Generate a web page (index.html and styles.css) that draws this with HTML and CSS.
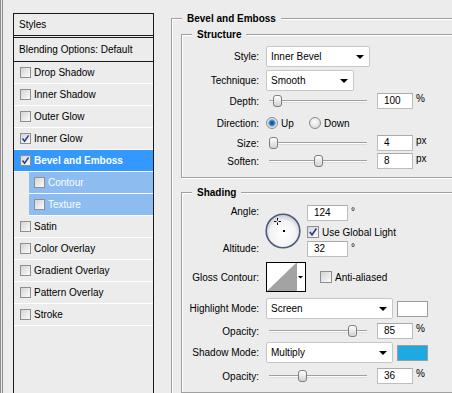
FILE: index.html
```html
<!DOCTYPE html>
<html lang="en">
<head>
    <meta charset="UTF-8">
    <meta name="viewport" content="width=device-width, initial-scale=1.0">
    <title>Layer Style</title>
    <link rel="stylesheet" href="styles.css">
</head>
<body>
    <div class="dialog">
        <!-- Effect list on the left -->
        <div class="styles-panel">
            <div class="styles-list">
                <div class="list-head">Styles</div>
                <div class="list-blend">Blending Options: Default</div>
                <div class="effect"><span class="check"></span>Drop Shadow</div>
                <div class="effect"><span class="check"></span>Inner Shadow</div>
                <div class="effect"><span class="check"></span>Outer Glow</div>
                <div class="effect"><span class="check"><svg width="9" height="9" viewBox="0 0 9 9"><path d="M1.5 4.5L3.6 7.2L7.6 1.3" fill="none" stroke="#2b3e8e" stroke-width="1.5"/></svg></span>Inner Glow</div>
                <div class="effect is-selected"><span class="check"><svg width="9" height="9" viewBox="0 0 9 9"><path d="M1.5 4.5L3.6 7.2L7.6 1.3" fill="none" stroke="#2b3e8e" stroke-width="1.5"/></svg></span>Bevel and Emboss</div>
                <div class="effect is-sub"><span class="check"></span>Contour</div>
                <div class="effect is-sub"><span class="check"></span>Texture</div>
                <div class="effect"><span class="check"></span>Satin</div>
                <div class="effect"><span class="check"></span>Color Overlay</div>
                <div class="effect"><span class="check"></span>Gradient Overlay</div>
                <div class="effect"><span class="check"></span>Pattern Overlay</div>
                <div class="effect"><span class="check"></span>Stroke</div>
            </div>
        </div>

        <!-- Options for the selected effect -->
        <div class="options">
            <fieldset class="group group-main">
                <legend>Bevel and Emboss</legend>

                <fieldset class="group group-sub structure">
                    <legend>Structure</legend>
                    <div class="row row-select">
                        <span class="label">Style:</span>
                        <div class="select select-style"><span>Inner Bevel</span><span class="arrow"></span></div>
                    </div>
                    <div class="row row-select row-technique">
                        <span class="label">Technique:</span>
                        <div class="select select-technique"><span>Smooth</span><span class="arrow"></span></div>
                    </div>
                    <div class="row row-field row-depth">
                        <span class="label">Depth:</span>
                        <div class="slider"><span class="thumb" style="left: 4px"></span></div>
                        <span class="num">100</span><span class="unit">%</span>
                    </div>
                    <div class="row row-field row-direction">
                        <span class="label">Direction:</span>
                        <span class="radio-opt radio-first"><span class="radio on"></span>Up</span>
                        <span class="radio-opt"><span class="radio"></span>Down</span>
                    </div>
                    <div class="row row-field row-size">
                        <span class="label">Size:</span>
                        <div class="slider"><span class="thumb" style="left: 0px"></span></div>
                        <span class="num">4</span><span class="unit">px</span>
                    </div>
                    <div class="row row-field">
                        <span class="label">Soften:</span>
                        <div class="slider"><span class="thumb" style="left: 45px"></span></div>
                        <span class="num">8</span><span class="unit">px</span>
                    </div>
                </fieldset>

                <fieldset class="group group-sub shading">
                    <legend>Shading</legend>
                    <div class="angle-block">
                        <div class="label angle-labels"><span>Angle:</span><span>Altitude:</span></div>
                        <svg class="dial" width="36" height="36" viewBox="0 0 36 36">
                            <defs>
                                <radialGradient id="dialFill" cx="50%" cy="58%" r="55%">
                                    <stop offset="0" stop-color="#ffffff"/>
                                    <stop offset="0.7" stop-color="#f3f3f3"/>
                                    <stop offset="1" stop-color="#cdcdcd"/>
                                </radialGradient>
                            </defs>
                            <circle cx="18" cy="18" r="16.8" fill="url(#dialFill)" stroke="#4b5c7e" stroke-width="1.6"/>
                            <path d="M9 8.5h2.5M13.5 8.5h2.5M12.5 5v2.5M12.5 9.5v2.5" stroke="#000" stroke-width="1"/>
                            <rect x="18" y="17" width="2" height="2" fill="#000"/>
                        </svg>
                        <div class="angle-fields">
                            <div class="field-line"><span class="num num-wide">124</span><span class="unit">°</span></div>
                            <div class="check-line"><span class="check check-lg"><svg width="10" height="10" viewBox="0 0 10 10"><path d="M1.8 5L4 7.8L8.4 1.5" fill="none" stroke="#2b3e8e" stroke-width="1.6"/></svg></span>Use Global Light</div>
                            <div class="field-line"><span class="num num-wide">32</span><span class="unit">°</span></div>
                        </div>
                    </div>
                    <div class="row row-gloss">
                        <span class="label">Gloss Contour:</span>
                        <svg class="contour" width="40" height="30" viewBox="0 0 40 30">
                            <rect x="0.5" y="0.5" width="39" height="29" fill="#fff" stroke="#000"/>
                            <polygon points="1,29 30,1 30,29" fill="#a3a3a3"/>
                            <line x1="30.5" y1="1" x2="30.5" y2="29" stroke="#a3a3a3"/>
                            <polygon points="32,14 37,14 34.5,16.5" fill="#000"/>
                        </svg>
                        <span class="check-line anti"><span class="check check-lg"></span>Anti-aliased</span>
                    </div>
                    <div class="row row-select row-mode">
                        <span class="label">Highlight Mode:</span>
                        <div class="select select-mode"><span>Screen</span><span class="arrow"></span></div>
                        <span class="swatch"></span>
                    </div>
                    <div class="row row-field row-opacity">
                        <span class="label">Opacity:</span>
                        <div class="slider"><span class="thumb" style="left: 79px"></span></div>
                        <span class="num">85</span><span class="unit">%</span>
                    </div>
                    <div class="row row-select row-shadow">
                        <span class="label">Shadow Mode:</span>
                        <div class="select select-mode"><span>Multiply</span><span class="arrow"></span></div>
                        <span class="swatch swatch-blue"></span>
                    </div>
                    <div class="row row-field row-last">
                        <span class="label">Opacity:</span>
                        <div class="slider"><span class="thumb" style="left: 29px"></span></div>
                        <span class="num">36</span><span class="unit">%</span>
                    </div>
                </fieldset>
            </fieldset>
        </div>
    </div>
</body>
</html>
```

FILE: styles.css
```css
html, body {
    margin: 0;
    padding: 0;
    height: 393px;
    overflow: hidden;
}
body {
    background-color: #ececec;
    font-family: "Liberation Sans", Arial, sans-serif;
    font-size: 10px;
    color: #000;
}
.dialog {
    display: flex;
    height: 393px;
    border-left: 3px double #8c8c8c;
    overflow: hidden;
}

/* left list */
.styles-panel {
    padding: 13px 0 0 10px;
    flex: none;
}
.styles-list {
    width: 139px;
    height: 420px;
    border: 1px solid #1a1a1a;
}
.list-head {
    height: 21px;
    line-height: 21px;
    padding-left: 5px;
    border-bottom: 3px double #1a1a1a;
}
.list-blend {
    height: 23px;
    line-height: 23px;
    padding-left: 5px;
    border-bottom: 1px solid #1a1a1a;
}
.effect {
    display: flex;
    align-items: center;
    height: 21px;
    padding-left: 6px;
    border-bottom: 1px solid #fff;
}
.effect.is-selected {
    background-color: #3399ff;
    color: #fff;
    font-weight: bold;
}
.effect.is-sub {
    margin-left: 15px;
    padding-left: 5px;
    background-color: #8cbcf0;
    color: #fff;
}
.check {
    display: flex;
    align-items: center;
    justify-content: center;
    width: 9px;
    height: 9px;
    margin-right: 3px;
    border: 1px solid #8f8f8f;
    background: linear-gradient(135deg, #d4d4d4, #fbfbfb);
    flex: none;
}
.check-lg {
    width: 10px;
    height: 10px;
}

/* right side */
.options {
    margin-left: 17px;
    padding-top: 12px;
}
.group {
    margin: 0;
    padding: 3px 0 0 9px;
    border: 1px solid #a0a0a0;
    box-shadow: inset 1px 1px 0 #fff, 1px 1px 0 #fff;
    min-width: 0;
}
.group legend {
    padding: 0 5px;
    font-weight: bold;
    line-height: 13px;
    background-color: #ececec;
}
.group-main {
    width: 330px;
    height: 500px;
}
.group-main > legend {
    margin-left: 1px;
}
.group-sub {
    padding: 5px 0 7px 10px;
}
.shading {
    margin-top: 8px;
    padding-top: 6px;
}

.row {
    display: flex;
    align-items: center;
}
.label {
    display: flex;
    justify-content: flex-end;
    width: 67px;
    margin-right: 7px;
    white-space: nowrap;
    flex: none;
}
.row-select {
    height: 21px;
}
.row-technique {
    margin-top: 3px;
}
.row-field {
    height: 18px;
}
.row-depth {
    margin-top: 1px;
}
.row-direction {
    margin-top: 4px;
}
.row-size {
    margin-top: 2px;
}
.select {
    display: flex;
    align-items: center;
    justify-content: space-between;
    box-sizing: border-box;
    height: 21px;
    padding: 0 5px 0 4px;
    background-color: #fff;
    border: 1px solid #c6c6c6;
    border-radius: 2px;
}
.select-style {
    width: 104px;
}
.select-technique {
    width: 88px;
}
.select-mode {
    width: 127px;
}
.arrow {
    width: 0;
    height: 0;
    border-left: 4px solid transparent;
    border-right: 4px solid transparent;
    border-top: 4px solid #000;
}
.slider {
    position: relative;
    width: 98px;
    height: 1px;
    margin: 0 10px 0 3px;
    border-top: 1px solid #9f9f9f;
    border-bottom: 1px solid #dcdcdc;
    background-color: #fff;
}
.thumb {
    position: absolute;
    top: -6px;
    width: 9px;
    height: 12px;
    box-sizing: border-box;
    border: 1px solid #7e7e7e;
    border-radius: 3px;
    background: linear-gradient(#ffffff, #d2d2d2);
}
.num {
    box-sizing: border-box;
    width: 36px;
    height: 16px;
    line-height: 14px;
    padding-left: 6px;
    background-color: #fff;
    border: 1px solid #bdbdbd;
    border-top-color: #aaaaaa;
}
.num-wide {
    width: 41px;
}
.unit {
    align-self: flex-start;
    margin-left: 3px;
    line-height: 13px;
}
.radio-opt {
    display: flex;
    align-items: center;
}
.radio-first {
    width: 43px;
}
.radio {
    width: 12px;
    height: 12px;
    box-sizing: border-box;
    margin-right: 3px;
    border: 1px solid #8a8a8a;
    border-radius: 50%;
    background: radial-gradient(circle at 45% 40%, #ffffff, #cfcfcf);
}
.radio.on {
    background: radial-gradient(circle, #0d4f95 0, #1f6bb8 2px, #58a3dd 3px, #d8d8d8 4px, #eeeeee 5px);
}

/* angle / altitude */
.angle-block {
    display: flex;
    align-items: center;
}
.angle-labels {
    flex-direction: column;
    justify-content: space-between;
    align-items: flex-end;
    align-self: stretch;
    padding-bottom: 2px;
}
.angle-labels span {
    line-height: 13px;
}
.dial {
    margin-left: -1px;
    flex: none;
}
.angle-fields {
    display: flex;
    flex-direction: column;
    margin-left: 6px;
}
.field-line {
    display: flex;
}
.check-line {
    display: flex;
    align-items: center;
}
.angle-fields .check-line {
    margin: 5px 0 3px;
}
.row-gloss {
    margin-top: 5px;
}
.contour {
    flex: none;
}
.anti {
    margin-left: 14px;
}
.row-mode {
    margin-top: 6px;
}
.row-opacity {
    margin-top: 3px;
}
.row-shadow {
    margin-top: 2px;
}
.row-last {
    margin-top: 4px;
}
.swatch {
    width: 31px;
    height: 16px;
    box-sizing: border-box;
    margin-left: 4px;
    border: 1px solid #9c9c9c;
    background-color: #fff;
}
.swatch-blue {
    background-color: #1fa9e2;
}
```
